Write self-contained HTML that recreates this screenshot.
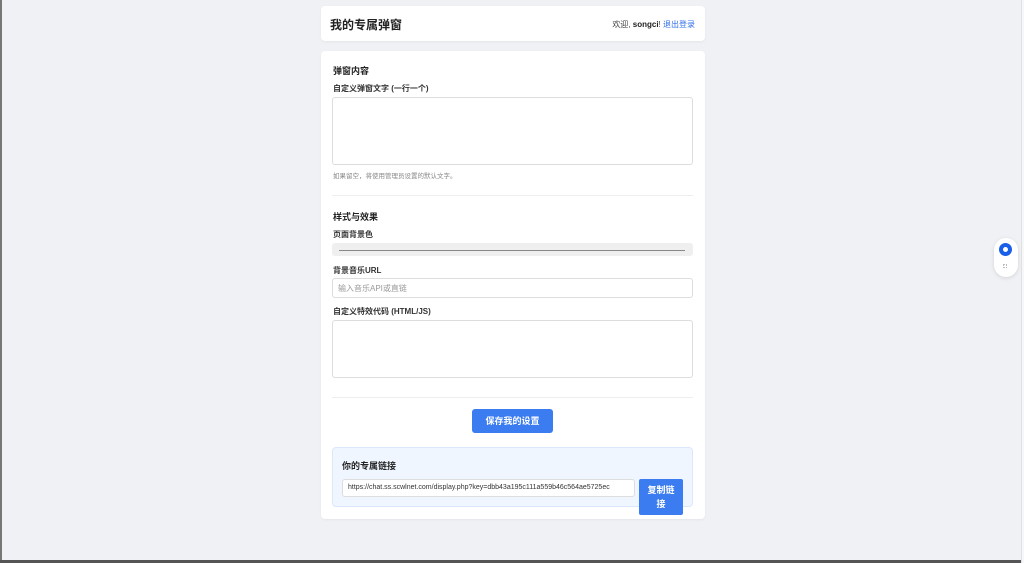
<!DOCTYPE html>
<html><head><meta charset="utf-8"><style>
*{margin:0;padding:0;box-sizing:border-box}
body{width:1024px;height:563px;background:#f0f1f4;font-family:"Liberation Sans","Noto Sans CJK SC",sans-serif;color:#222;position:relative;overflow:hidden}
.a{position:absolute}
.card{background:#fff;border-radius:4px;box-shadow:0 1px 2px rgba(0,0,0,.05)}
.lbl{font-size:8px;font-weight:bold;color:#333}
.h{font-size:9px;font-weight:bold;color:#222}
.box{border:1px solid #ddd;border-radius:3px;background:#fff}
</style></head><body>
<div class="a" style="left:0;top:0;width:2px;height:563px;background:#777"></div>
<div class="a" style="left:0;top:560px;width:1024px;height:3px;background:#555"></div>
<div class="a" style="right:0;top:0;width:2px;height:563px;background:#f7f7f9"></div>
<div class="a" style="right:2px;top:0;width:1px;height:563px;background:#e0e1e4"></div>

<div class="a card" style="left:321px;top:6px;width:384px;height:35px"></div>
<div class="a" style="left:330px;top:16px;font-size:12px;font-weight:bold">我的专属弹窗</div>
<div class="a" style="right:329px;top:19px;font-size:8px;color:#444">欢迎, <b style="color:#222">songci</b>! <span style="color:#2f6fe8">退出登录</span></div>

<div class="a card" style="left:321px;top:51px;width:384px;height:468px"></div>
<div class="a h" style="left:333px;top:64px">弹窗内容</div>
<div class="a lbl" style="left:333px;top:83px">自定义弹窗文字 (一行一个)</div>
<div class="a box" style="left:332px;top:97px;width:361px;height:68px"></div>
<div class="a" style="left:333px;top:170px;font-size:6.5px;color:#888">如果留空，将使用管理员设置的默认文字。</div>
<div class="a" style="left:332px;top:195px;width:361px;height:1px;background:#eee"></div>
<div class="a h" style="left:333px;top:210px">样式与效果</div>
<div class="a lbl" style="left:333px;top:229px">页面背景色</div>
<div class="a" style="left:332px;top:243px;width:361px;height:13px;background:#efefef;border-radius:3px"></div>
<div class="a" style="left:339px;top:250px;width:346px;height:1px;background:#888"></div>
<div class="a lbl" style="left:333px;top:265px">背景音乐URL</div>
<div class="a box" style="left:332px;top:278px;width:361px;height:20px"></div>
<div class="a" style="left:338px;top:283px;font-size:8px;color:#999">输入音乐API或直链</div>
<div class="a lbl" style="left:333px;top:306px">自定义特效代码 (HTML/JS)</div>
<div class="a box" style="left:332px;top:320px;width:361px;height:58px"></div>
<div class="a" style="left:332px;top:397px;width:361px;height:1px;background:#eee"></div>
<div class="a" style="left:472px;top:409px;width:81px;height:24px;background:#3b7cf0;border-radius:3px;color:#fff;font-size:9px;font-weight:bold;text-align:center;line-height:24px">保存我的设置</div>
<div class="a" style="left:332px;top:447px;width:361px;height:60px;background:#eff6ff;border:1px solid #dbe8fb;border-radius:4px"></div>
<div class="a h" style="left:342px;top:459px">你的专属链接</div>
<div class="a box" style="left:342px;top:479px;width:293px;height:18px;font-size:7px;color:#333;line-height:16px;padding-left:5px">https://chat.ss.scwlnet.com/display.php?key=dbb43a195c111a559b46c564ae5725ec</div>
<div class="a" style="left:639px;top:479px;width:44px;height:36px;background:#3b7cf0;border-radius:2px;color:#fff;font-size:9px;font-weight:bold;text-align:center;line-height:14px;padding-top:4px">复制链<br>接</div>

<div class="a" style="left:994px;top:238px;width:24px;height:39px;background:#fff;border-radius:12px;box-shadow:0 1px 4px rgba(0,0,0,.12)"></div>
<div class="a" style="left:999px;top:243px;width:13px;height:13px;border-radius:50%;border:4px solid #1a5fe8"></div>
<div class="a" style="left:1003px;top:264px;width:4px;height:4px;border:1px dotted #bbb"></div>
</body></html>
